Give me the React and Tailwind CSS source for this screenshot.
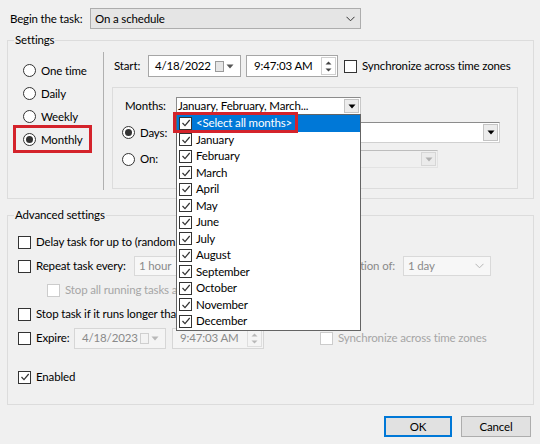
import React from 'react';

const months = [
    'January', 'February', 'March', 'April', 'May', 'June',
    'July', 'August', 'September', 'October', 'November', 'December'
];

const Check = ({ color = '#333' }) => (
    <svg width="10" height="10" viewBox="0 0 10 10">
        <polyline points="1.5,5 4,7.7 8.7,2" fill="none" stroke={color} strokeWidth="1.2" />
    </svg>
);

const CheckBox = ({ checked, disabled, className = '' }) => (
    <span
        className={`w-[13px] h-[13px] shrink-0 flex items-center justify-center bg-white border ${disabled ? 'border-[#cccccc]' : 'border-[#333333]'} ${className}`}
    >
        {checked && <Check />}
    </span>
);

const Radio = ({ checked }) => (
    <span className="w-[13px] h-[13px] shrink-0 rounded-full border border-[#333333] bg-white flex items-center justify-center">
        {checked && <span className="w-[7px] h-[7px] rounded-full bg-[#333333]" />}
    </span>
);

const Triangle = ({ color = '#000' }) => (
    <svg width="8" height="5" viewBox="0 0 8 5">
        <polygon points="0.5,0.5 7.5,0.5 4,4.5" fill={color} />
    </svg>
);

const Chevron = ({ color = '#000' }) => (
    <svg width="9" height="6" viewBox="0 0 9 6">
        <polyline points="0.5,0.8 4.5,4.8 8.5,0.8" fill="none" stroke={color} strokeWidth="1" />
    </svg>
);

// old style combobox with a boxed arrow button
const ArrowBox = ({ disabled }) => (
    <span className={`w-[15px] shrink-0 self-stretch m-[1px] flex items-center justify-center border ${disabled ? 'border-[#d6d6d6] bg-[#ebebeb]' : 'border-[#c4c4c4] bg-[#ececec]'}`}>
        <Triangle color={disabled ? '#b0b0b0' : '#000'} />
    </span>
);

// flat disabled combobox (1 hour, 1 day)
const FlatCombo = ({ text, className = '' }) => (
    <div className={`h-[20px] shrink-0 flex items-center justify-between pl-[4px] pr-[6px] border border-[#d9d9d9] bg-[#f7f7f7] text-[#8a8a8a] ${className}`}>
        <span className="whitespace-nowrap">{text}</span>
        <Chevron color="#b5b5b5" />
    </div>
);

const CalendarIcon = ({ disabled }) => (
    <span className="flex items-center gap-[2px] shrink-0">
        <svg width="9" height="11" viewBox="0 0 9 11">
            <rect x="0.5" y="0.5" width="8" height="10" fill={disabled ? '#f3f3f3' : '#e6e6e6'} stroke={disabled ? '#cfcfcf' : '#9a9a9a'} />
        </svg>
        <Triangle color={disabled ? '#b8b8b8' : '#555'} />
    </span>
);

const Spinner = ({ disabled }) => (
    <span className={`w-[15px] shrink-0 self-stretch my-[1px] mr-[1px] flex flex-col items-center justify-center gap-[3px] border ${disabled ? 'border-[#dedede]' : 'border-[#cfcfcf]'}`}>
        <svg width="7" height="4" viewBox="0 0 7 4">
            <polygon points="0.5,3.5 6.5,3.5 3.5,0.5" fill={disabled ? '#b8b8b8' : '#444'} />
        </svg>
        <svg width="7" height="4" viewBox="0 0 7 4">
            <polygon points="0.5,0.5 6.5,0.5 3.5,3.5" fill={disabled ? '#b8b8b8' : '#444'} />
        </svg>
    </span>
);

const Label = ({ children, className = '' }) => (
    <span className={`shrink-0 whitespace-nowrap ${className}`}>{children}</span>
);

const App = () => {
    return (
        <div className="w-[540px] h-[444px] bg-[#f0f0f0] relative overflow-hidden text-[11.5px] tracking-[-0.15px] leading-[16px] text-black font-[Lato,sans-serif]">
            {/* Begin the task */}
            <div className="flex items-center pt-[8px] pl-[10px]">
                <Label className="w-[80px]">Begin the task:</Label>
                <div className="w-[271px] h-[21px] flex items-center justify-between pl-[4px] pr-[5px] border border-[#adadad] bg-[#e5e5e5]">
                    <span>On a schedule</span>
                    <Chevron color="#333" />
                </div>
            </div>

            {/* Settings group */}
            <div className="relative mt-[11px] ml-[7px] w-[527px] h-[159px] border border-[#dcdcdc] flex">
                <span className="absolute -top-[9px] left-[6px] px-[1px] bg-[#f0f0f0]">Settings</span>

                <div className="w-[95px] shrink-0 pt-[18px] pl-[15px] flex flex-col">
                    {['One time', 'Daily', 'Weekly', 'Monthly'].map((label) => (
                        <div key={label} className="h-[23px] flex items-center gap-[5px]">
                            <Radio checked={label === 'Monthly'} />
                            <Label>{label}</Label>
                        </div>
                    ))}
                </div>

                <div className="mt-[11px] h-[138px] w-px shrink-0 bg-[#b0b0b0]" />

                <div className="pt-[14px] pl-[8px] flex flex-col">
                    <div className="h-[22px] flex items-center">
                        <Label className="w-[36px] pl-[2px]">Start:</Label>
                        <div className="w-[93px] h-[22px] shrink-0 flex items-center justify-between pl-[6px] pr-[6px] bg-white border border-[#a6a6a6]">
                            <span>4/18/2022</span>
                            <CalendarIcon />
                        </div>
                        <div className="ml-[5px] w-[92px] h-[22px] shrink-0 flex items-center justify-between pl-[7px] bg-white border border-[#a6a6a6]">
                            <span className="whitespace-nowrap">9:47:03 AM</span>
                            <Spinner />
                        </div>
                        <CheckBox className="ml-[6px]" />
                        <Label className="ml-[5px]">Synchronize across time zones</Label>
                    </div>

                    {/* Monthly panel */}
                    <div className="mt-[10px] w-[406px] h-[102px] border border-[#dcdcdc] pt-[9px] pl-[9px] flex flex-col">
                        <div className="h-[18px] flex items-center">
                            <Label className="w-[54px] pl-[3px]">Months:</Label>
                            <div className="w-[185px] h-[18px] shrink-0 flex items-center justify-between bg-white border border-[#8c8c8c] border-r-[#c8c8c8]">
                                <span className="pl-[1px] whitespace-nowrap">January, February, March...</span>
                                <ArrowBox />
                            </div>
                        </div>
                        <div className="mt-[7px] h-[21px] flex items-center">
                            <span className="w-[54px] shrink-0 flex items-center gap-[5px]">
                                <Radio checked />
                                <Label>Days:</Label>
                            </span>
                            <div className="w-[324px] h-[21px] shrink-0 flex items-center justify-between bg-white border border-[#8c8c8c] border-b-[#d0d0d0] border-r-[#d0d0d0]">
                                <span className="pl-[3px]">1</span>
                                <ArrowBox />
                            </div>
                        </div>
                        <div className="mt-[7px] h-[18px] flex items-center">
                            <span className="w-[54px] shrink-0 flex items-center gap-[5px]">
                                <Radio />
                                <Label>On:</Label>
                            </span>
                            <div className="w-[262px] h-[18px] shrink-0 flex items-center justify-end bg-[#f0f0f0] border border-[#bdbdbd] border-b-[#e3e3e3] border-r-[#e3e3e3]">
                                <ArrowBox disabled />
                            </div>
                        </div>
                    </div>
                </div>
            </div>

            {/* Advanced settings group */}
            <div className="relative mt-[16px] ml-[7px] w-[527px] h-[190px] border border-[#dcdcdc] pt-[14px] pl-[10px] flex flex-col">
                <span className="absolute -top-[9px] left-[6px] px-[1px] bg-[#f0f0f0]">Advanced settings</span>

                <div className="h-[24px] flex items-center">
                    <CheckBox />
                    <Label className="ml-[5px] w-[180px]">Delay task for up to (random delay):</Label>
                    <FlatCombo text="1 hour" className="w-[88px]" />
                </div>
                <div className="h-[24px] flex items-center">
                    <CheckBox />
                    <Label className="ml-[5px] w-[98px]">Repeat task every:</Label>
                    <FlatCombo text="1 hour" className="w-[88px]" />
                    <Label className="w-[173px] text-right text-[#8a8a8a]">for a duration of:</Label>
                    <FlatCombo text="1 day" className="ml-[8px] w-[88px]" />
                </div>
                <div className="h-[24px] flex items-center pl-[29px]">
                    <CheckBox disabled />
                    <Label className="ml-[5px] text-[#a6a6a6]">Stop all running tasks at end of repetition duration</Label>
                </div>
                <div className="h-[24px] flex items-center">
                    <CheckBox />
                    <Label className="ml-[5px] w-[170px]">Stop task if it runs longer than:</Label>
                    <FlatCombo text="3 days" className="w-[88px]" />
                </div>
                <div className="h-[24px] flex items-center">
                    <CheckBox />
                    <Label className="ml-[5px] w-[38px]">Expire:</Label>
                    <div className="w-[92px] h-[21px] shrink-0 flex items-center justify-between pl-[7px] pr-[6px] bg-[#f4f4f4] border border-[#d6d6d6] text-[#8a8a8a]">
                        <span>4/18/2023</span>
                        <CalendarIcon disabled />
                    </div>
                    <div className="ml-[6px] w-[92px] h-[21px] shrink-0 flex items-center justify-between pl-[7px] bg-[#f4f4f4] border border-[#d6d6d6] text-[#8a8a8a]">
                        <span className="whitespace-nowrap">9:47:03 AM</span>
                        <Spinner disabled />
                    </div>
                    <CheckBox disabled className="ml-[56px]" />
                    <Label className="ml-[5px] text-[#a6a6a6]">Synchronize across time zones</Label>
                </div>
                <div className="mt-[15px] h-[24px] flex items-center">
                    <CheckBox checked />
                    <Label className="ml-[5px]">Enabled</Label>
                </div>
            </div>

            {/* Buttons */}
            <div className="mt-[11px] pr-[9px] flex justify-end gap-[9px]">
                <button className="w-[68px] h-[21px] bg-[#e1e1e1] border border-[#0078d7] shadow-[inset_0_0_0_1px_#0078d7]">OK</button>
                <button className="w-[70px] h-[21px] bg-[#e1e1e1] border border-[#adadad]">Cancel</button>
            </div>

            {/* open months list */}
            <div className="absolute left-[176px] top-[114px] w-[185px] h-[217px] bg-white border border-[#646464]">
                <div className="h-[16.5px] flex items-center gap-[4px] pl-[2px] bg-[#0078d7] text-white">
                    <CheckBox checked className="w-[12px] h-[12px] border-[#6b6b6b]" />
                    <Label>&lt;Select all months&gt;</Label>
                </div>
                {months.map((m) => (
                    <div key={m} className="h-[16.5px] flex items-center gap-[4px] pl-[2px]">
                        <CheckBox checked className="w-[12px] h-[12px] border-[#6b6b6b]" />
                        <Label>{m}</Label>
                    </div>
                ))}
            </div>

            {/* red highlight marks */}
            <div className="absolute left-[13px] top-[125px] w-[79px] h-[28px] border-[3px] border-[#d4232b]" />
            <div className="absolute left-[173px] top-[112px] w-[125px] h-[21px] border-[3px] border-[#d4232b]" />
        </div>
    );
};

export default App;
